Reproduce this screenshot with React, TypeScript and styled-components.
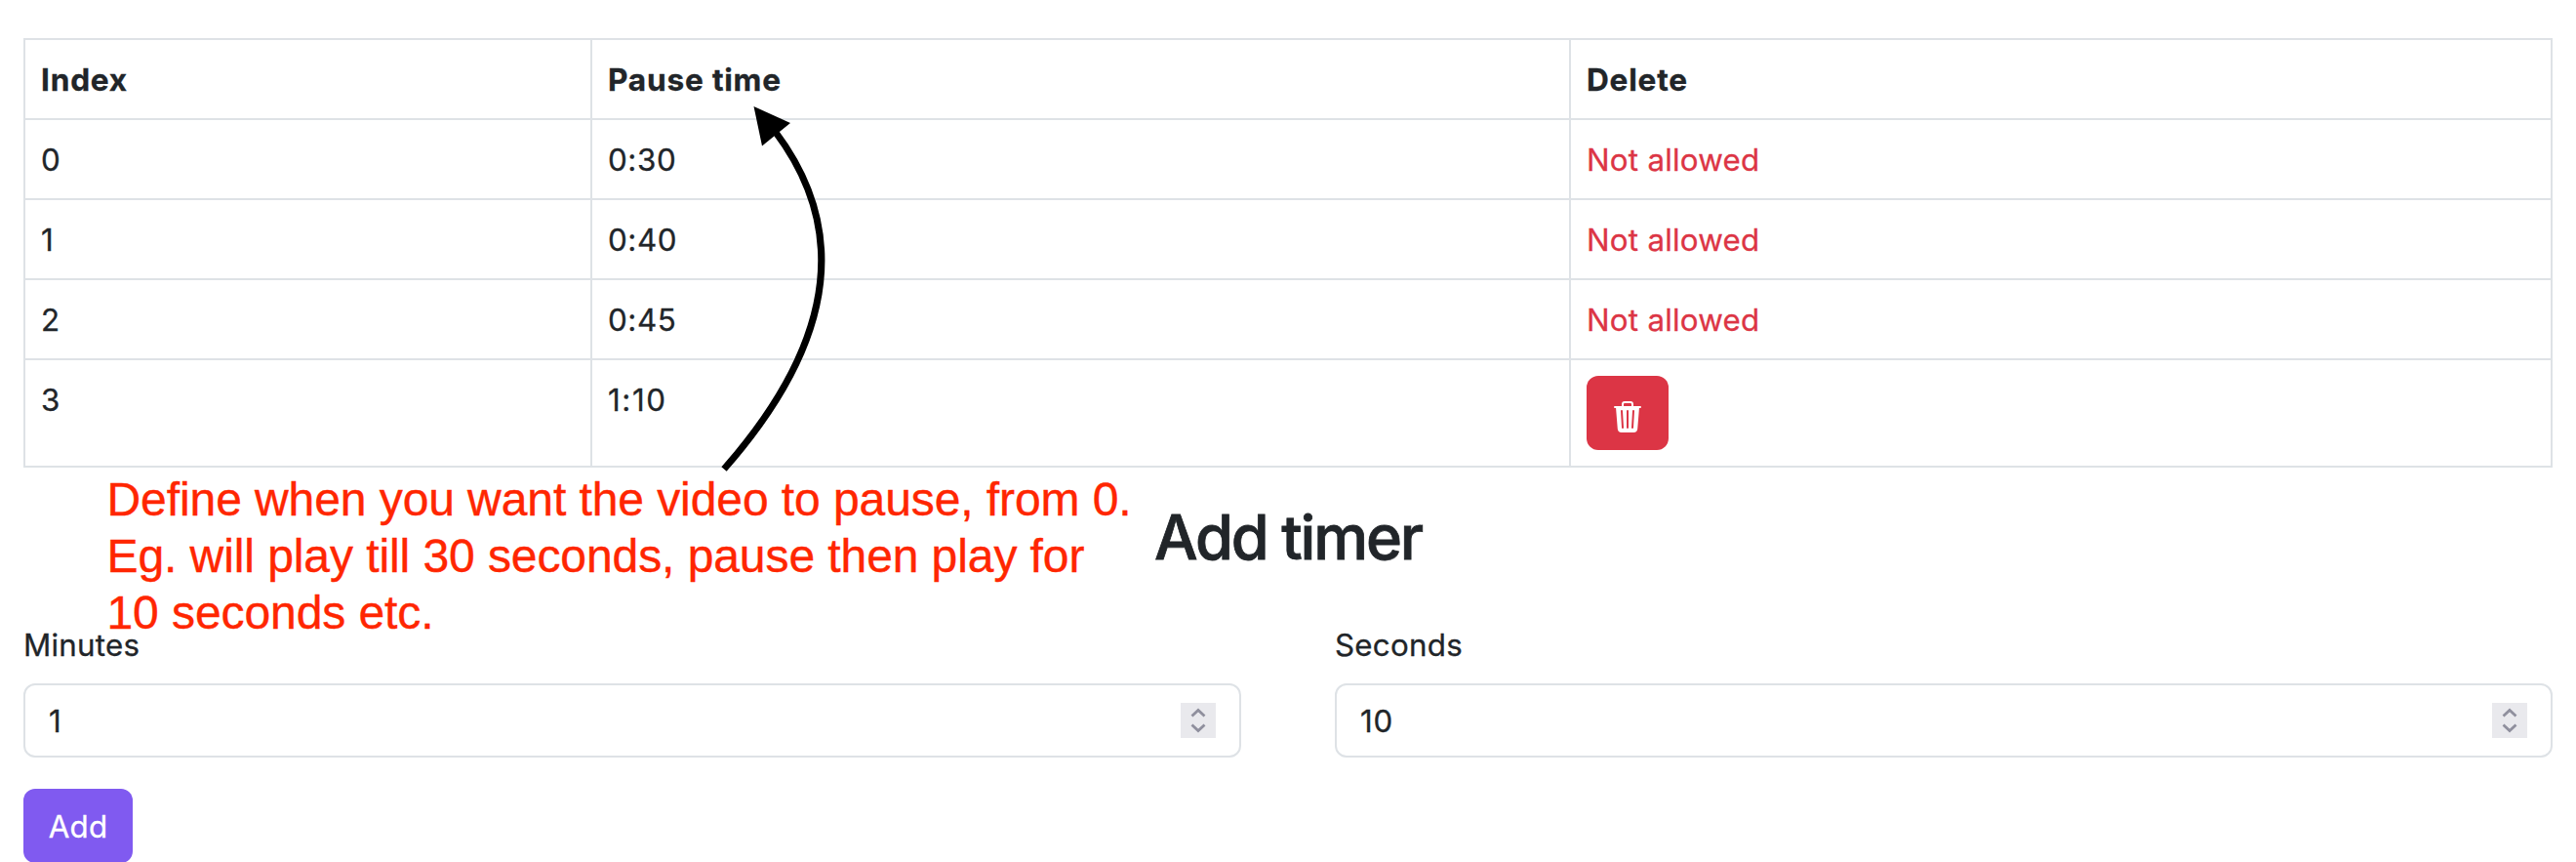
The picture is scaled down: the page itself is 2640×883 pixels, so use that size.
import React from "react";
import styled, { createGlobalStyle } from "styled-components";
import { BsTrash3Fill } from "react-icons/bs";

const GlobalStyle = createGlobalStyle`
  *, *::before, *::after { box-sizing: border-box; }
  html, body { margin: 0; background: #fff; overflow: hidden; }
  body {
    color: #212529;
    font-family: Inter, "Liberation Sans", sans-serif;
    font-size: 31.3px;
    font-weight: 400;
    line-height: 48px;
    letter-spacing: 0.25px;
    -webkit-text-stroke: 0.3px currentColor;
  }
`;

const Page = styled.main`
  position: relative;
  width: 2640px;
  height: 883px;
  padding: 39px 24px 0;
  overflow: hidden;
`;

const Table = styled.table`
  width: 2592px;
  margin: 0 0 32px;
  table-layout: fixed;
  border-collapse: separate;
  border-spacing: 0;
  border-top: 2px solid #dee2e6;
  border-left: 2px solid #dee2e6;
`;

const Col = styled.col<{ $w: number }>`
  width: ${(p) => p.$w}px;
`;

const HeadCell = styled.th`
  padding: 17px 16px 15px;
  text-align: left;
  font-weight: 700;
  font-size: 31.6px;
  letter-spacing: 0.8px;
  border-right: 2px solid #dee2e6;
  border-bottom: 2px solid #dee2e6;
`;

const Cell = styled.td<{ $danger?: boolean; $action?: boolean; $spacing?: number }>`
  padding: ${(p) => (p.$action ? "16px" : "17px 16px 15px")};
  vertical-align: top;
  color: ${(p) => (p.$danger ? "#dc3545" : "inherit")};
  letter-spacing: ${(p) => p.$spacing ?? 0.25}px;
  border-right: 2px solid #dee2e6;
  border-bottom: 2px solid #dee2e6;
`;

const Button = styled.button<{ $color: string; $w: number }>`
  display: flex;
  align-items: center;
  justify-content: center;
  width: ${(p) => p.$w}px;
  height: 76px;
  padding: 2px 0 0;
  border: 0;
  border-radius: 12px;
  background: ${(p) => p.$color};
  color: #fff;
  font: inherit;
  letter-spacing: inherit;
`;

const TrashIcon = styled(BsTrash3Fill)`
  width: 32px;
  height: 32px;
  margin-top: 6px;
`;

const Title = styled.h1`
  margin: 0 0 48px;
  height: 77px;
  padding-top: 1px;
  font-size: 63px;
  line-height: 77px;
  font-weight: 500;
  text-align: center;
  letter-spacing: -2.15px;
  -webkit-text-stroke: 0.8px currentColor;
`;

const Fields = styled.div`
  display: grid;
  grid-template-columns: 1fr 1fr;
  column-gap: 96px;
  margin-bottom: 32px;
`;

const Field = styled.label`
  display: flex;
  flex-direction: column;
  gap: 15px;
  padding-top: 1px;
`;

const InputBox = styled.span`
  display: flex;
  align-items: center;
  height: 76px;
  padding: 0 24px;
  border: 2px solid #dee2e6;
  border-radius: 12px;
`;

const Input = styled.input`
  flex: 1;
  min-width: 0;
  height: 50px;
  padding: 2px 0 0;
  border: 0;
  outline: 0;
  background: transparent;
  color: inherit;
  font: inherit;
  letter-spacing: 0.8px;
`;

const Spinner = styled.svg`
  width: 36px;
  height: 36px;
  background: #e9e9ed;
`;

const Arrow = styled.svg`
  position: absolute;
  left: 730px;
  top: 100px;
  width: 130px;
  height: 390px;
`;

const Note = styled.p`
  position: absolute;
  left: 109.5px;
  top: 483px;
  margin: 0;
  color: #ff2600;
  font-family: "Liberation Sans", Arial, sans-serif;
  font-size: 48px;
  font-weight: 400;
  line-height: 58px;
  letter-spacing: -0.08px;
  -webkit-text-stroke: 0.4px #ff2600;
  white-space: nowrap;
`;

const NoteLine = styled.span`
  display: block;
`;

const timers = [
  { time: "0:30", locked: true, spacing: 0.6 },
  { time: "0:40", locked: true, spacing: 0.6 },
  { time: "0:45", locked: true, spacing: 0.6 },
  { time: "1:10", locked: false, spacing: 1.6 },
];

function NumberField({ label, value }: { label: string; value: string }) {
  return (
    <Field>
      {label}
      <InputBox>
        <Input defaultValue={value} inputMode="numeric" />
        <Spinner viewBox="0 0 36 36" fill="none" stroke="#8f8f9d" strokeWidth="2.8">
          <path d="M11.5 13.5 18 7.5l6.5 6" />
          <path d="M11.5 22.5 18 28.5l6.5-6" />
        </Spinner>
      </InputBox>
    </Field>
  );
}

export default function App() {
  return (
    <>
      <GlobalStyle />
      <Page>
        <Table>
          <colgroup>
            <Col $w={581} />
            <Col $w={1003} />
            <Col $w={1006} />
          </colgroup>
          <thead>
            <tr>
              <HeadCell>Index</HeadCell>
              <HeadCell>Pause time</HeadCell>
              <HeadCell>Delete</HeadCell>
            </tr>
          </thead>
          <tbody>
            {timers.map((timer, i) => (
              <tr key={timer.time}>
                <Cell>{i}</Cell>
                <Cell $spacing={timer.spacing}>{timer.time}</Cell>
                <Cell $danger={timer.locked} $action={!timer.locked}>
                  {timer.locked ? (
                    "Not allowed"
                  ) : (
                    <Button $color="#dc3545" $w={84} aria-label="Delete">
                      <TrashIcon />
                    </Button>
                  )}
                </Cell>
              </tr>
            ))}
          </tbody>
        </Table>
        <Title>Add timer</Title>
        <Fields>
          <NumberField label="Minutes" value="1" />
          <NumberField label="Seconds" value="10" />
        </Fields>
        <Button $color="#805af0" $w={112}>Add</Button>
        <Arrow viewBox="730 100 130 390">
          <path d="M742 480.5Q910.5 289 794.6 135" fill="none" stroke="#000" strokeWidth="7" />
          <path d="M772.5 109 810 126 781 149.5z" fill="#000" />
        </Arrow>
        <Note>
          <NoteLine>Define when you want the video to pause, from 0.</NoteLine>
          <NoteLine>Eg. will play till 30 seconds, pause then play for</NoteLine>
          <NoteLine>10 seconds etc.</NoteLine>
        </Note>
      </Page>
    </>
  );
}
